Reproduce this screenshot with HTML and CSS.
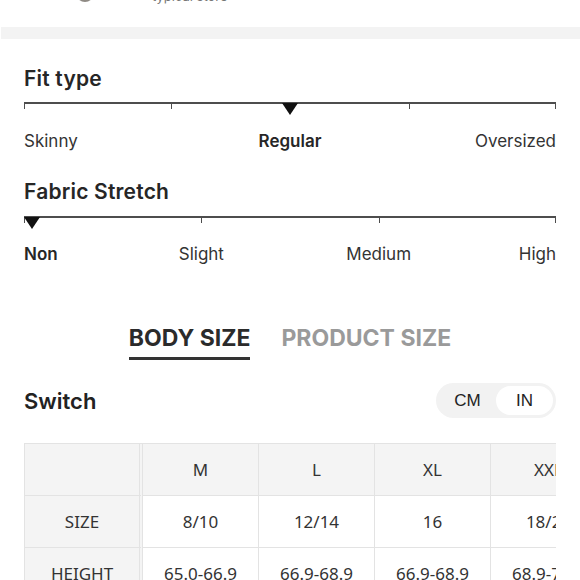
FILE: index.html
```html
<!DOCTYPE html>
<html lang="en">
<head>
<meta charset="utf-8">
<title>Size guide</title>
<link rel="stylesheet" href="styles.css">
</head>
<body>
<div class="top">
  <div class="thumb"></div>
  <div class="shop-name">typical store</div>
</div>
<div class="band"></div>

<section class="section">
  <h2 class="title">Fit type</h2>
  <div class="scale scale-fit">
    <div class="seg"></div>
    <div class="seg"></div>
    <div class="seg seg-last"></div>
    <span class="marker marker-center"></span>
  </div>
  <div class="labels labels-fit">
    <span class="lbl-left">Skinny</span>
    <span class="lbl-center active">Regular</span>
    <span class="lbl-right">Oversized</span>
  </div>

  <h2 class="title title-2">Fabric Stretch</h2>
  <div class="scale scale-stretch">
    <div class="seg"></div>
    <div class="seg"></div>
    <div class="seg seg-last"></div>
    <span class="marker marker-start"></span>
  </div>
  <div class="labels labels-stretch">
    <span class="lbl-left active">Non</span>
    <span class="lbl-mid lbl-a">Slight</span>
    <span class="lbl-mid lbl-b">Medium</span>
    <span class="lbl-right lbl-end">High</span>
  </div>
</section>

<nav class="tabs">
  <span class="tab tab-active">BODY SIZE</span>
  <span class="tab">PRODUCT SIZE</span>
</nav>

<div class="switch-row">
  <span class="switch-title">Switch</span>
  <div class="toggle">
    <span class="opt">CM</span>
    <span class="opt opt-on">IN</span>
  </div>
</div>

<div class="table-wrap">
  <table class="size-table">
    <tr class="head">
      <td class="first"></td>
      <td>M</td><td>L</td><td>XL</td><td>XXL</td><td>3XL</td>
    </tr>
    <tr>
      <td class="first">SIZE</td>
      <td>8/10</td><td>12/14</td><td>16</td><td>18/20</td><td>22/24</td>
    </tr>
    <tr>
      <td class="first">HEIGHT</td>
      <td>65.0-66.9</td><td>66.9-68.9</td><td>66.9-68.9</td><td>68.9-70.9</td><td>68.9-70.9</td>
    </tr>
  </table>
</div>
</body>
</html>
```
FILE: styles.css
```css
* { box-sizing: border-box; }
body {
  margin: 0;
  background: #fff;
  font-family: "Inter", "Noto Sans", sans-serif;
  color: #2b2b2b;
}
.top {
  height: 27px;
  overflow: hidden;
  display: flex;
  align-items: flex-start;
  padding-left: 76px;
  gap: 58px;
}
.thumb {
  width: 18px;
  height: 18px;
  margin-top: -16px;
  border-radius: 50%;
  border: 2px solid #8f8a84;
}
.shop-name {
  margin-top: -12px;
  font-size: 13px;
  line-height: 16px;
  color: #777;
}
.band {
  height: 12px;
  margin-left: 1px;
  background: #f3f3f3;
}

.section { padding: 0 24px; }
.title {
  margin: 27px 0 0;
  font-size: 21px;
  line-height: 26px;
  font-weight: 600;
  letter-spacing: 0.2px;
  color: #262626;
}
.scale {
  position: relative;
  display: grid;
  margin-top: 10px;
  height: 7px;
}
.scale-fit { grid-template-columns: 147fr 238fr 147fr; }
.scale-stretch { grid-template-columns: 1fr 1fr 1fr; margin-top: 11px; }
.seg {
  border-top: 2px solid #4d4d4d;
  border-left: 1px solid #4d4d4d;
}
.seg-last { border-right: 1px solid #4d4d4d; }
.marker {
  position: absolute;
  top: 1px;
  width: 0;
  height: 0;
  border-left: 8px solid transparent;
  border-right: 8px solid transparent;
  border-top: 12px solid #111;
}
.marker-center { left: 50%; margin-left: -8px; }
.marker-start { left: 0; }

.labels {
  display: grid;
  margin-top: 21px;
  font-size: 17px;
  line-height: 22px;
  color: #333;
}
.labels-fit { grid-template-columns: 1fr auto 1fr; }
.labels-stretch { grid-template-columns: repeat(6, 1fr); margin-top: 20px; }
.lbl-left { text-align: left; }
.lbl-center { text-align: center; }
.lbl-right { text-align: right; }
.lbl-a { grid-column: 2 / 4; text-align: center; }
.lbl-b { grid-column: 4 / 6; text-align: center; }
.lbl-end { grid-column: 6 / 7; }
.active { font-weight: 600; color: #262626; }

.tabs {
  display: flex;
  justify-content: center;
  gap: 31px;
  margin-top: 59px;
}
.tab {
  font-size: 23px;
  line-height: 28px;
  font-weight: 700;
  color: #9a9a9a;
  padding-bottom: 5px;
  border-bottom: 3px solid transparent;
}
.tab-active { color: #2b2b2b; border-bottom-color: #333; }

.switch-row {
  display: flex;
  justify-content: space-between;
  align-items: center;
  margin: 23px 24px 0;
}
.switch-title {
  font-size: 22px;
  font-weight: 600;
  color: #222;
}
.toggle {
  display: flex;
  width: 120px;
  height: 35px;
  padding: 3px;
  border-radius: 18px;
  background: #f2f2f2;
  font-family: "Liberation Sans", Arial, sans-serif;
  font-size: 17px;
  color: #222;
}
.opt {
  flex: 1;
  display: flex;
  align-items: center;
  justify-content: center;
  border-radius: 15px;
}
.opt-on { background: #fff; }

.table-wrap {
  margin: 25px 24px 0;
  overflow: hidden;
}
.size-table {
  border-collapse: separate;
  border-spacing: 0;
  border-top: 1px solid #e3e3e3;
  border-left: 1px solid #e3e3e3;
  font-family: "Noto Sans", sans-serif;
  font-size: 17px;
  color: #333;
}
.size-table td {
  width: 116px;
  min-width: 116px;
  height: 52px;
  padding: 0;
  text-align: center;
  border-right: 1px solid #e3e3e3;
  border-bottom: 1px solid #e3e3e3;
  white-space: nowrap;
}
.size-table td.first {
  width: 118px;
  min-width: 118px;
  background: #f4f4f4;
  border-right: 4px double #e3e3e3;
}
.size-table .head td { background: #f4f4f4; }
```
